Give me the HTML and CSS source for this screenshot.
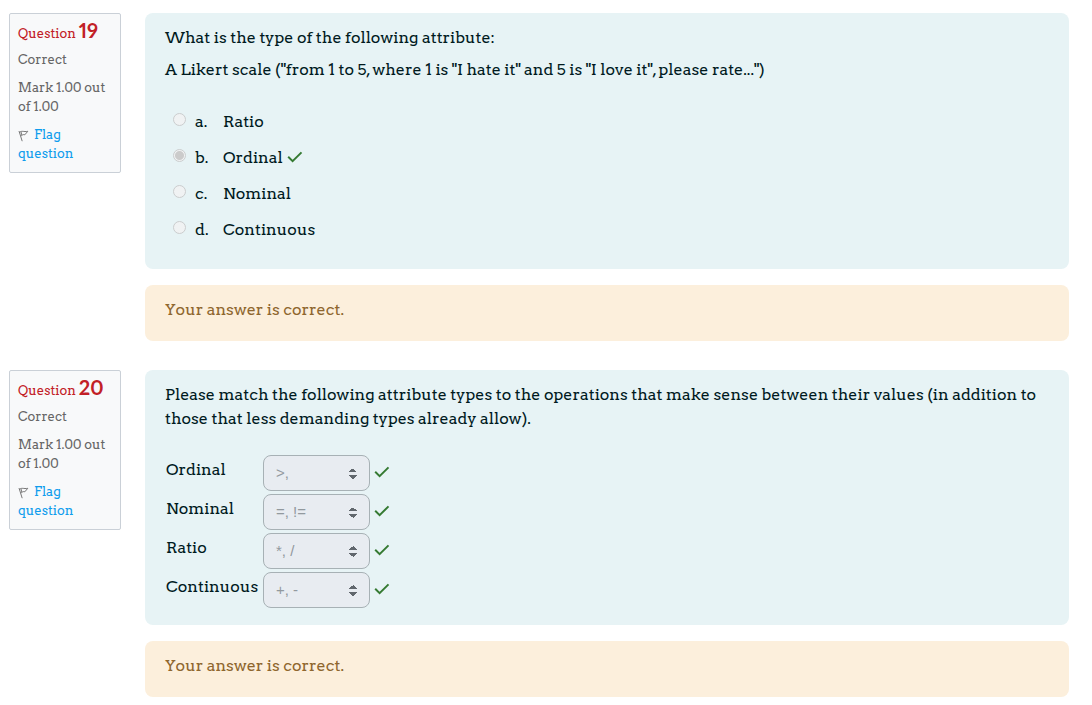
FILE: index.html
```html
<!DOCTYPE html>
<html lang="en">
<head>
<meta charset="utf-8">
<title>Quiz review</title>
<link rel="stylesheet" href="styles.css">
</head>
<body>
<svg class="sprite" aria-hidden="true">
  <symbol id="check" viewBox="0 0 16 12"><path d="M1.2 5.8 5.6 10.1 14.5 1.4" fill="none" stroke="#357a32" stroke-width="2"/></symbol>
  <symbol id="flag" viewBox="0 0 12 13"><path d="M1 2 4.2 12.2M1.2 3.8C3.5 1 5.5 3.2 9.8 2.3L6.8 5.8C5.2 5.2 4.5 6 3.2 6.8M3 3 3.8 6" fill="none" stroke="#777" stroke-width="1"/></symbol>
</svg>
<main class="quiz">
  <section class="question">
    <aside class="info">
      <h3 class="number">Question <span class="qno">19</span></h3>
      <div class="state">Correct</div>
      <div class="grade">Mark 1.00 out of 1.00</div>
      <div class="flagging"><svg class="flag"><use href="#flag"/></svg><a class="flag-link" href="#">Flag question</a></div>
    </aside>
    <div class="content">
      <div class="formulation">
        <p class="text">What is the type of the following attribute:</p>
        <p class="text">A Likert scale ("from 1 to 5, where 1 is "I hate it" and 5 is "I love it", please rate...")</p>
        <div class="answers">
          <div class="option"><input class="radio" type="radio" name="q19" id="a" disabled><label class="label" for="a"><span class="letter">a.</span>Ratio</label></div>
          <div class="option"><input class="radio" type="radio" name="q19" id="b" checked disabled><label class="label" for="b"><span class="letter">b.</span>Ordinal</label><svg class="check"><use href="#check"/></svg></div>
          <div class="option"><input class="radio" type="radio" name="q19" id="c" disabled><label class="label" for="c"><span class="letter">c.</span>Nominal</label></div>
          <div class="option"><input class="radio" type="radio" name="q19" id="d" disabled><label class="label" for="d"><span class="letter">d.</span>Continuous</label></div>
        </div>
      </div>
      <div class="feedback">Your answer is correct.</div>
    </div>
  </section>
  <section class="question">
    <aside class="info">
      <h3 class="number">Question <span class="qno">20</span></h3>
      <div class="state">Correct</div>
      <div class="grade">Mark 1.00 out of 1.00</div>
      <div class="flagging"><svg class="flag"><use href="#flag"/></svg><a class="flag-link" href="#">Flag question</a></div>
    </aside>
    <div class="content">
      <div class="formulation">
        <p class="text">Please match the following attribute types to the operations that make sense between their values (in addition to those that less demanding types already allow).</p>
        <div class="matching">
          <label class="term" for="m1">Ordinal</label><div class="control"><select class="select" id="m1" disabled><option>&gt;,</option></select><svg class="check"><use href="#check"/></svg></div>
          <label class="term" for="m2">Nominal</label><div class="control"><select class="select" id="m2" disabled><option>=, !=</option></select><svg class="check"><use href="#check"/></svg></div>
          <label class="term" for="m3">Ratio</label><div class="control"><select class="select" id="m3" disabled><option>*, /</option></select><svg class="check"><use href="#check"/></svg></div>
          <label class="term" for="m4">Continuous</label><div class="control"><select class="select" id="m4" disabled><option>+, -</option></select><svg class="check"><use href="#check"/></svg></div>
        </div>
      </div>
      <div class="feedback">Your answer is correct.</div>
    </div>
  </section>
</main>
</body>
</html>
```
FILE: styles.css
```css
* { box-sizing: border-box; }
body {
  margin: 0;
  background: #fff;
  color: #001a1e;
  font: 16px/24px Arvo, "DejaVu Serif", serif;
}
.sprite { position: absolute; width: 0; height: 0; }
.quiz {
  display: flex;
  flex-direction: column;
  gap: 29px;
  padding: 13px 23px 8px 9px;
}
.question { display: flex; align-items: flex-start; gap: 24px; }
.info {
  flex: 0 0 112px;
  padding: 7px 8px 9px;
  border: 1px solid #cad0d7;
  border-radius: 2px;
  background: #f8f9fa;
  color: #666;
  font-size: 13px;
  line-height: 19px;
}
.number {
  margin: 0;
  color: #c22026;
  font-size: 13px;
  font-weight: 400;
  line-height: 20px;
  white-space: nowrap;
}
.qno { font: 700 20px/18px Lato, sans-serif; font-variant-numeric: proportional-nums; }
.state { margin-top: 6px; }
.grade { margin-top: 9px; }
.flagging { margin-top: 9px; }
.flag { width: 12px; height: 13px; margin-right: 4px; vertical-align: -3px; }
.flag-link { color: #0f9ded; text-decoration: none; }
.content { flex: 1; display: flex; flex-direction: column; gap: 16px; }
.formulation {
  padding: 13px 20px 17px;
  border-radius: 8px;
  background: #e7f3f5;
}
.text { margin: 0 0 8px; }
.answers { padding: 14px 0 4px 8px; }
.option { display: flex; align-items: center; height: 36px; }
.radio {
  appearance: none;
  width: 13px;
  height: 13px;
  margin: 0 9px 6px 0;
  border: 1px solid #cbcdce;
  border-radius: 50%;
  background: #f0f2f3;
}
.radio:checked { background: radial-gradient(circle, #cbcbcb 4px, #f0f2f3 5px); }
.label { display: flex; }
.letter { width: 28px; }
.check { flex: none; width: 16px; height: 12px; margin-left: 4px; margin-bottom: 2px; }
.matching {
  display: grid;
  grid-template-columns: 97px 1fr;
  row-gap: 3px;
  padding-top: 16px;
  padding-left: 1px;
}
.term { padding-top: 3px; }
.control { display: flex; align-items: center; }
.select {
  appearance: none;
  width: 107px;
  height: 36px;
  padding: 0 12px;
  border: 1px solid #a7b1b5;
  border-radius: 8px;
  background:
    conic-gradient(from 135deg at 50% 0, #61676d 90deg, transparent 0) 85px 12px / 8px 4px no-repeat,
    conic-gradient(from -45deg at 50% 100%, #61676d 90deg, transparent 0) 85px 19px / 8px 4px no-repeat,
    #e8ecf1;
  color: #92999e;
  font: 15px/20px "Liberation Sans", sans-serif;
  opacity: 1;
}
.feedback {
  padding: 13px 20px 19px;
  border-radius: 8px;
  background: #fcefdc;
  color: #8e662e;
}
```
